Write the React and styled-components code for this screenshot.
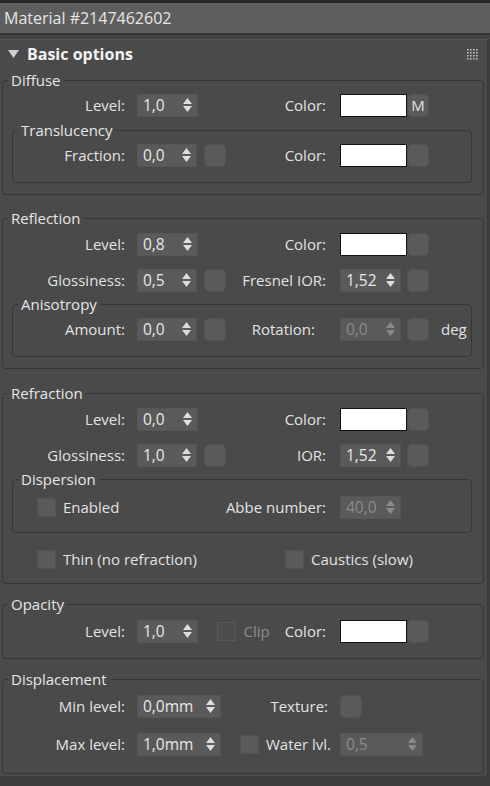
import React from 'react';
import styled, { createGlobalStyle } from 'styled-components';

const GlobalStyle = createGlobalStyle`
  html, body {
    margin: 0;
    padding: 0;
    background: #3b3b3b;
  }
  body {
    font-family: "Open Sans", "Noto Sans", sans-serif;
    font-size: 15px;
    color: #e2e2e2;
  }
`;

const Page = styled.div`
  width: 490px;
  height: 786px;
  overflow: hidden;
  background: #3d3d3d;
  border-top: 3px solid #262626;
  box-sizing: border-box;
`;

const NameBar = styled.div`
  height: 30px;
  background: #5e5e5e;
  border-bottom: 2px solid #363636;
  display: flex;
  align-items: center;
  padding-left: 4px;
  font-size: 16px;
  color: #e6e6e6;
`;

const Spacer = styled.div`
  height: 4px;
  background: #444444;
`;

const Rollout = styled.section`
  width: 488px;
  background: #4a4a4a;
  border-top: 1px solid #575757;
  border-right: 1px solid #3a3a3a;
  border-bottom: 1px solid #3a3a3a;
  box-sizing: border-box;
  padding-bottom: 2px;
`;

const RolloutHeader = styled.div`
  height: 28px;
  display: flex;
  align-items: center;
  padding: 0 9px 0 8px;
  gap: 8px;
  font-weight: 700;
  font-size: 16px;
  color: #f2f2f2;
`;

const Title = styled.span`
  flex: 1;
`;

const Group = styled.fieldset`
  margin: ${p => p.$mt || 0}px ${p => (p.$sub ? 11 : 3)}px 0 ${p => (p.$sub ? 9 : 2)}px;
  padding: 0 0 ${p => p.$pb || 0}px;
  border: 1px solid #363636;
  border-radius: 4px;
  min-width: 0;
`;

const Legend = styled.legend`
  margin-left: 5px;
  padding: 0 3px;
  font-size: 15px;
  line-height: 18px;
  color: #e6e6e6;
`;

const Row = styled.div`
  display: grid;
  grid-template-columns: ${p => 125 - p.$inset}px 101px 100px 1fr;
  align-items: center;
  height: 24px;
  margin-top: ${p => p.$mt || 0}px;
  white-space: nowrap;
`;

const Label = styled.span`
  text-align: right;
  color: ${p => (p.$off ? '#8c8c8c' : '#e2e2e2')};
  margin-left: ${p => p.$ml || 0}px;
`;

const Lead = styled.div`
  display: flex;
  align-items: center;
  gap: 7px;
  padding-left: ${p => p.$pad || 0}px;
`;

const Mid = styled.div`
  display: flex;
  align-items: center;
  gap: 7px;
  padding-left: 12px;
`;

const Side = styled.div`
  display: flex;
  align-items: center;
  justify-content: flex-end;
  gap: 7px;
  margin-right: ${p => p.$shift || 0}px;
`;

const Tail = styled.div`
  display: flex;
  align-items: center;
  padding-left: 14px;
`;

const SpinBox = styled.div`
  width: ${p => p.$w || 61}px;
  height: 23px;
  box-sizing: border-box;
  background: #5a5a5a;
  border: 1px solid #555555;
  display: flex;
  align-items: center;
  justify-content: space-between;
  padding: 0 5px 0 5px;
  font-size: 15.5px;
  color: ${p => (p.$off ? '#8a8a8a' : '#e8e8e8')};
`;

const MapButton = styled.div`
  width: 22px;
  height: 23px;
  box-sizing: border-box;
  margin-left: ${p => p.$ml || 0}px;
  background: #5a5a5a;
  border: 1px solid #535353;
  border-radius: 5px;
  display: flex;
  align-items: center;
  justify-content: center;
  font-size: 15px;
  color: #e2e2e2;
`;

const Swatch = styled.div`
  width: 67px;
  height: 23px;
  box-sizing: border-box;
  background: #ffffff;
  border: 1px solid #111111;
`;

const Check = styled.div`
  width: 19px;
  height: 19px;
  box-sizing: border-box;
  flex: none;
  background: ${p => (p.$off ? '#4d4d4d' : '#5a5a5a')};
  border: 1px solid ${p => (p.$off ? '#585858' : '#525252')};
`;

const Unit = styled.span`
  margin-left: 12px;
`;

const CheckRow = styled.div`
  display: flex;
  align-items: center;
  height: 24px;
  margin-top: ${p => p.$mt || 0}px;
  padding-left: ${p => p.$pad || 0}px;
`;

const CheckItem = styled.div`
  display: flex;
  align-items: center;
  gap: 7px;
  width: ${p => (p.$w ? `${p.$w}px` : 'auto')};
  white-space: nowrap;
`;

function Arrows({ off }) {
  const c = off ? '#8a8a8a' : '#dedede';
  return (
    <svg width="9" height="14" viewBox="0 0 9 14">
      <path d="M4.5 0 L9 6 H0 Z" fill={c} />
      <path d="M0 8 H9 L4.5 14 Z" fill={c} />
    </svg>
  );
}

function Spinner({ value, w, off }) {
  return (
    <SpinBox $w={w} $off={off}>
      <span>{value}</span>
      <Arrows off={off} />
    </SpinBox>
  );
}

function Dots() {
  const dots = [];
  for (let r = 0; r < 4; r++) {
    for (let c = 0; c < 4; c++) {
      dots.push(<rect key={`${r}-${c}`} x={c * 3} y={r * 3} width="1.6" height="1.6" fill="#bdbdbd" />);
    }
  }
  return (
    <svg width="11" height="11" viewBox="0 0 11 11">
      {dots}
    </svg>
  );
}

function Caret() {
  return (
    <svg width="11" height="9" viewBox="0 0 11 9">
      <path d="M0 0 H11 L5.5 8 Z" fill="#d0d0d0" />
    </svg>
  );
}

export default function App() {
  return (
    <>
      <GlobalStyle />
      <Page>
        <NameBar>Material #2147462602</NameBar>
        <Spacer />
        <Rollout>
          <RolloutHeader>
            <Caret />
            <Title>Basic options</Title>
            <Dots />
          </RolloutHeader>

          <Group $mt={3} $pb={11}>
            <Legend>Diffuse</Legend>
            <Row $inset={3} $mt={4}>
              <Label>Level:</Label>
              <Mid><Spinner value="1,0" /></Mid>
              <Side><Label>Color:</Label></Side>
              <Tail><Swatch /><MapButton>M</MapButton></Tail>
            </Row>
            <Group $sub $mt={4} $pb={15}>
              <Legend>Translucency</Legend>
              <Row $inset={13} $mt={4}>
                <Label>Fraction:</Label>
                <Mid><Spinner value="0,0" /><MapButton /></Mid>
                <Side><Label>Color:</Label></Side>
                <Tail><Swatch /><MapButton /></Tail>
              </Row>
            </Group>
          </Group>

          <Group $mt={14} $pb={11}>
            <Legend>Reflection</Legend>
            <Row $inset={3} $mt={5}>
              <Label>Level:</Label>
              <Mid><Spinner value="0,8" /></Mid>
              <Side><Label>Color:</Label></Side>
              <Tail><Swatch /><MapButton /></Tail>
            </Row>
            <Row $inset={3} $mt={12}>
              <Label>Glossiness:</Label>
              <Mid><Spinner value="0,5" /><MapButton /></Mid>
              <Side><Label>Fresnel IOR:</Label></Side>
              <Tail><Spinner value="1,52" /><MapButton $ml={6} /></Tail>
            </Row>
            <Group $sub $mt={3} $pb={15}>
              <Legend>Anisotropy</Legend>
              <Row $inset={13} $mt={4}>
                <Label>Amount:</Label>
                <Mid><Spinner value="0,0" /><MapButton /></Mid>
                <Side $shift={11}><Label>Rotation:</Label></Side>
                <Tail>
                  <Spinner value="0,0" off />
                  <MapButton $ml={6} />
                  <Unit>deg</Unit>
                </Tail>
              </Row>
            </Group>
          </Group>

          <Group $mt={15} $pb={12}>
            <Legend>Refraction</Legend>
            <Row $inset={3} $mt={5}>
              <Label>Level:</Label>
              <Mid><Spinner value="0,0" /></Mid>
              <Side><Label>Color:</Label></Side>
              <Tail><Swatch /><MapButton /></Tail>
            </Row>
            <Row $inset={3} $mt={12}>
              <Label>Glossiness:</Label>
              <Mid><Spinner value="1,0" /><MapButton /></Mid>
              <Side><Label>IOR:</Label></Side>
              <Tail><Spinner value="1,52" /><MapButton $ml={6} /></Tail>
            </Row>
            <Group $sub $mt={3} $pb={13}>
              <Legend>Dispersion</Legend>
              <Row $inset={13} $mt={7}>
                <Lead $pad={24}><Check /><span>Enabled</span></Lead>
                <span />
                <Side><Label>Abbe number:</Label></Side>
                <Tail><Spinner value="40,0" off /></Tail>
              </Row>
            </Group>
            <CheckRow $mt={14} $pad={34}>
              <CheckItem $w={248}><Check /><span>Thin (no refraction)</span></CheckItem>
              <CheckItem><Check /><span>Caustics (slow)</span></CheckItem>
            </CheckRow>
          </Group>

          <Group $mt={11} $pb={15}>
            <Legend>Opacity</Legend>
            <Row $inset={3} $mt={6}>
              <Label>Level:</Label>
              <Mid><Spinner value="1,0" /></Mid>
              <Side>
                <Check $off />
                <Label $off>Clip</Label>
                <Label $ml={8}>Color:</Label>
              </Side>
              <Tail><Swatch /><MapButton /></Tail>
            </Row>
          </Group>

          <Group $mt={11} $pb={17}>
            <Legend>Displacement</Legend>
            <Row $inset={3} $mt={6}>
              <Label>Min level:</Label>
              <Mid><Spinner value="0,0mm" w={84} /></Mid>
              <Side $shift={-2}><Label>Texture:</Label></Side>
              <Tail><MapButton /></Tail>
            </Row>
            <Row $inset={3} $mt={14}>
              <Label>Max level:</Label>
              <Mid><Spinner value="1,0mm" w={84} /></Mid>
              <Side $shift={-5}><Check /><Label>Water lvl.</Label></Side>
              <Tail><Spinner value="0,5" w={83} off /></Tail>
            </Row>
          </Group>
        </Rollout>
      </Page>
    </>
  );
}
